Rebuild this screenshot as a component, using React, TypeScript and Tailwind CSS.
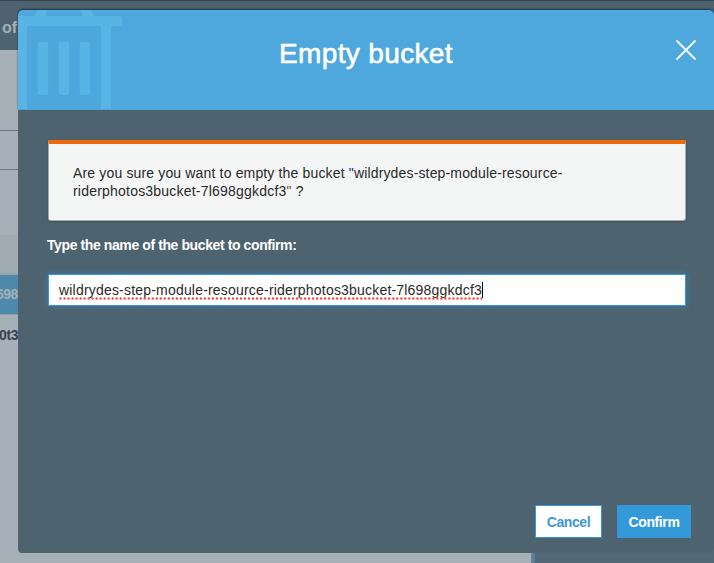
function TrashArt() {
  return (
    <svg className="absolute left-0 top-0" width="106" height="100" viewBox="0 0 106 100" fill="#58b4e4">
      <path d="M0 6 H17 L19 0 H29.5 L27 6 H65 L62 0 H73 L75.5 6 H101 Q104 6 104 9 V13 Q104 16 101 16 H93 V99 H0 Z" />
      <path d="M9 16 H83 V97 Q83 99 81 99 H11 Q9 99 9 97 Z" fill="#4ea7dc" />
      <rect x="19.7" y="32" width="10.5" height="53" rx="2.5" />
      <rect x="40.7" y="32" width="10.5" height="53" rx="2.5" />
      <rect x="61.7" y="32" width="10.5" height="53" rx="2.5" />
    </svg>
  );
}

function Backdrop() {
  return (
    <div className="flex h-full flex-col bg-[#a5b0b8]">
      <div className="h-[50px] shrink-0 border-t border-[#38444d] bg-[#4d6370] pl-[2px] pt-[16px] text-[16px] font-bold leading-[22px] text-[#a5b0b8]">of</div>
      <div className="h-[81px] shrink-0 border-b border-[#6a7881]" />
      <div className="h-[39px] shrink-0 border-b border-[#6a7881]" />
      <div className="h-[65px] shrink-0" />
      <div className="h-[40px] shrink-0 border-b-2 border-[#98a4ac] bg-[#a1abb2]" />
      <div className="flex h-[40px] shrink-0 items-center border-b border-[#909ca5] bg-[#4e88ab] text-[14px] font-bold text-[#a5b0b8]">
        <span className="-ml-[4px] tracking-[-0.5px]">698</span>
      </div>
      <div className="flex h-[40px] shrink-0 items-center text-[14px] font-bold text-[#38434b]">
        <span className="-ml-px tracking-[-0.4px]">0t3</span>
      </div>
      <div className="flex flex-1 justify-end">
        <div className="w-[183px] border-l-2 border-[#74818a] bg-[#526875]">
          <div className="h-full border-l-2 border-[#4384ac]" />
        </div>
      </div>
    </div>
  );
}

export default function App() {
  return (
    <div className="relative h-[563px] w-[714px] overflow-hidden font-['Liberation_Sans',Arial,sans-serif]">
      <Backdrop />
      <div className="absolute left-[18px] top-[10px] flex h-[543px] w-[696px] flex-col rounded-[4px] bg-[#4d6370]">
        <header className="relative flex h-[100px] shrink-0 items-start justify-center overflow-hidden rounded-t-[5px] bg-[#4ea8dd] pt-[27px] shadow-[0_-1px_2px_rgba(20,35,45,0.75)]">
          <TrashArt />
          <h1 className="text-[28px] leading-[34px] tracking-[0.35px] text-white [-webkit-text-stroke:0.6px_white]">Empty bucket</h1>
          <svg className="absolute left-[657px] top-[29px]" width="22" height="22" viewBox="0 0 22 22" stroke="#f4faff" strokeWidth="1.9">
            <path d="M1.5 1.5 L20.5 20.5 M20.5 1.5 L1.5 20.5" />
          </svg>
        </header>
        <main className="relative flex flex-1 flex-col bg-[#4d6370] pl-[30px] pr-[28px] pt-[30px]">
          <div className="h-[81px] rounded-b-[3px] border border-t-4 border-[#a4acad] border-t-[#ee6b0b] bg-[#f4f6f6] pl-[24px] pt-[20px] text-[14px] leading-[18px] text-[#292929] shadow-[0_1px_2px_#3f505a]">
            <p className="whitespace-nowrap tracking-[0.155px]">Are you sure you want to empty the bucket <span className="text-[#22228a]">"</span>wildrydes-step-module-resource-</p>
            <p className="whitespace-nowrap tracking-[0.21px]">riderphotos3bucket-7l698ggkdcf3<span className="text-[#a33232]">"</span> ?</p>
          </div>
          <label className="-ml-px mt-[15px] block text-[14px] font-bold leading-[18px] tracking-[-0.4px] text-white">Type the name of the bucket to confirm:</label>
          <div className="mt-[20px] flex h-[32px] items-center border border-[#3498db] bg-white pl-[10px] text-[14px] leading-[18px] text-[#292929] shadow-[0_0_8px_rgba(52,152,219,0.45)]">
            <span className="relative tracking-[0.195px]">
              wildrydes-step-module-resource-riderphotos3bucket-7l698ggkdcf3
              <svg className="absolute -bottom-px left-0" width="100%" height="3">
                <line x1="1.5" y1="1.5" x2="100%" y2="1.5" stroke="#fa4a3c" strokeWidth="2.4" strokeLinecap="round" strokeDasharray="0.01 4" />
              </svg>
            </span>
            <span className="h-[16px] w-px bg-black" />
          </div>
        </main>
        <footer className="flex justify-end gap-[15px] pb-[15px] pr-[23px] text-[14px] font-bold tracking-[-0.4px]">
          <button className="h-[33px] w-[67px] border border-[#3498db] bg-white pt-px text-[#3f97d6]">Cancel</button>
          <button className="h-[33px] w-[74px] bg-[#3399d9] pt-px text-white">Confirm</button>
        </footer>
      </div>
    </div>
  );
}
